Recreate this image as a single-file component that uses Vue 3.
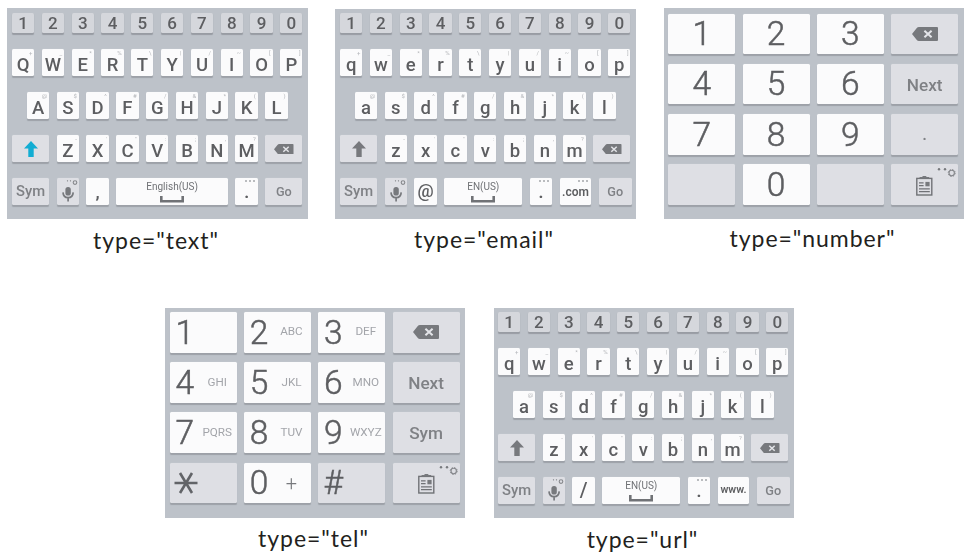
<script setup>
const digits = '1234567890'.split('').map((t) => ({ t, kind: 'digit' }))

const hints = {
  q: '+', w: '_', e: '*', r: '%', t: '\\', y: '|', u: '/', i: '~', o: '[', p: ']',
  a: '@', s: '$', d: '^', f: '#', g: '/', h: '&', j: '*', k: '(', l: ')',
  z: '-', x: "'", c: '"', v: ':', b: ';', n: ',', m: '?'
}

const letters = (text, upper) =>
  text.split('').map((c) => ({ t: upper ? c.toUpperCase() : c, hint: hints[c], kind: 'letter' }))

const qwerty = (upper, bottom) => [
  { cls: 'row-digits', keys: digits },
  { cls: 'row-top', keys: letters('qwertyuiop', upper) },
  { cls: 'row-home', keys: letters('asdfghjkl', upper) },
  {
    cls: 'row-low',
    keys: [
      { icon: 'shift', kind: upper ? 'func wide active' : 'func wide' },
      ...letters('zxcvbnm', upper),
      { icon: 'back', kind: 'func wide' }
    ]
  },
  {
    cls: 'row-bottom',
    keys: [{ t: 'Sym', kind: 'func wide sym' }, { icon: 'mic', kind: 'func unit' }, ...bottom]
  }
]

const netBottom = (first, last, lastKind) => [
  { t: first, kind: 'unit mark' },
  { t: 'EN(US)', kind: 'space', icon: 'space' },
  { t: '.', kind: 'unit dot', dots: true },
  { t: last, kind: 'domain ' + lastKind, dots: lastKind === 'com' },
  { t: 'Go', kind: 'func go narrow' }
]

const textBottom = [
  { t: ',', kind: 'unit comma' },
  { t: 'English(US)', kind: 'space', icon: 'space' },
  { t: '.', kind: 'unit dot', dots: true },
  { t: 'Go', kind: 'func go wide' }
]

const num = (t, sub) => ({ t, sub, kind: 'num' })

const numberPad = [
  num('1'), num('2'), num('3'), { icon: 'back', kind: 'func' },
  num('4'), num('5'), num('6'), { t: 'Next', kind: 'func word' },
  num('7'), num('8'), num('9'), { t: '.', kind: 'func point' },
  { kind: 'func' }, num('0'), { kind: 'func' }, { icon: 'clip', kind: 'func' }
]

const telPad = [
  num('1', ' '), num('2', 'ABC'), num('3', 'DEF'), { icon: 'back', kind: 'func' },
  num('4', 'GHI'), num('5', 'JKL'), num('6', 'MNO'), { t: 'Next', kind: 'func word' },
  num('7', 'PQRS'), num('8', 'TUV'), num('9', 'WXYZ'), { t: 'Sym', kind: 'func word' },
  { icon: 'star', kind: 'func star' }, { t: '0', sub: '+', kind: 'num plus' },
  { t: '#', sub: ' ', kind: 'func num' }, { icon: 'clip', kind: 'func' }
]

const lines = [
  [
    { type: 'text', rows: qwerty(true, textBottom) },
    { type: 'email', rows: qwerty(false, netBottom('@', '.com', 'com')) },
    { type: 'number', pad: numberPad }
  ],
  [
    { type: 'tel', pad: telPad },
    { type: 'url', rows: qwerty(false, netBottom('/', 'www.', 'www')) }
  ]
]
</script>

<template>
  <main class="page">
    <section v-for="(line, n) in lines" :key="n" class="line" :class="'line-' + n">
      <figure v-for="kb in line" :key="kb.type" :class="'fig-' + kb.type">
        <div class="board" :class="kb.pad ? 'pad' : 'qwerty'">
          <div
            v-for="(row, r) in kb.rows || [{ cls: 'cells', keys: kb.pad }]"
            :key="r"
            class="row"
            :class="row.cls"
          >
            <div v-for="(k, i) in row.keys" :key="i" class="key" :class="[k.kind, { tel: k.sub }]">
              <span v-if="k.t" class="label">{{ k.t }}</span>
              <span v-if="k.sub" class="sub">{{ k.sub }}</span>
              <span v-if="k.hint" class="hint">{{ k.hint }}</span>
              <span v-if="k.dots" class="more"><i></i><i></i><i></i></span>

              <svg v-if="k.icon === 'shift'" class="i-shift" viewBox="0 0 14 16">
                <path d="M7 0 14 7.6H9.7V16H4.3V7.6H0Z" />
              </svg>
              <svg v-if="k.icon === 'back'" class="i-back" viewBox="0 0 26 14">
                <path d="M7 0H25Q26 0 26 1V13Q26 14 25 14H7Q5.5 14 4.6 12.8L0 7 4.6 1.2Q5.5 0 7 0Z" />
                <path class="cross" d="M12.4 3.7 19.6 10.3M19.6 3.7 12.4 10.3" />
              </svg>
              <svg v-if="k.icon === 'mic'" class="i-mic" viewBox="0 0 22 26">
                <rect x="8.4" y="9" width="5.4" height="8.5" rx="2.6" />
                <path class="line" d="M6 14.4Q6.3 19.6 11.1 19.6T16.2 14.4M11.1 19.6V23.6" />
                <circle cx="10.5" cy="2.8" r=".65" /><circle cx="13.5" cy="2.8" r=".65" />
                <circle class="cog" cx="18" cy="4.6" r="1.8" />
              </svg>
              <svg v-if="k.icon === 'space'" class="i-space" viewBox="0 0 24 7">
                <path d="M1.3 0V5.3H22.7V0" />
              </svg>
              <svg v-if="k.icon === 'star'" class="i-star" viewBox="0 0 24 22">
                <path d="M.5 11H23.5M6 1 18 21M18 1 6 21" />
              </svg>
              <svg v-if="k.icon === 'clip'" class="i-clip" viewBox="0 0 67 41">
                <rect class="frame" x="25.8" y="14.4" width="15" height="16.6" />
                <path d="M28.6 14.4V13H31L32 12H34.8L35.8 13H38.2V14.4Z" />
                <path class="rule" d="M28 18.8H32.6M28 21.6H32.6M28 24.8H38.8M28 27.6H38.8" />
                <rect x="34.4" y="17.9" width="4.2" height="4.4" />
                <circle cx="48" cy="5.3" r="1.2" /><circle cx="54" cy="5.3" r="1.2" />
                <circle class="cog-dash" cx="60.7" cy="9" r="3.5" />
                <circle class="cog" cx="60.7" cy="9" r="2.7" />
              </svg>
            </div>
          </div>
        </div>
        <figcaption>type="{{ kb.type }}"</figcaption>
      </figure>
    </section>
  </main>
</template>

<style>
body { margin: 0; background: #fff; overflow: hidden; }
</style>

<style scoped>
.page { width: 966px; height: 558px; box-sizing: border-box; padding-top: 8px; background: #fff; }
.line { display: flex; align-items: flex-start; height: 300px; }
.line-0 { padding-left: 7px; }
.line-1 { padding-left: 165px; height: 250px; }
figure { margin: 0; width: 301px; }
.fig-email { margin: 1px 0 0 27px; }
.fig-number { margin-left: 28px; width: 300px; }
.fig-tel { width: 300px; }
.fig-url { width: 300px; margin-left: 29px; }

.board {
  box-sizing: border-box; height: 211px; background: #bdc2c9; overflow: hidden;
  font-family: Roboto, "Liberation Sans", sans-serif; color: #5d5e61;
}
.fig-email .board, .fig-tel .board, .fig-url .board { height: 210px; }
.qwerty { padding: 5px 0 0 5px; }
.fig-email .qwerty { padding-top: 4px; }
.fig-url .qwerty { padding: 4px 0 0 4px; }
.row { display: flex; gap: 7.5px; filter: blur(.45px); }
.row-digits { height: 20px; margin-bottom: 16px; }
.row-top { height: 27px; margin-bottom: 16px; }
.row-home { height: 27px; margin-bottom: 15.5px; padding-left: 14.9px; }
.row-low { height: 27px; margin-bottom: 16.5px; }
.row-bottom { height: 26.5px; }

.key {
  position: relative; box-sizing: border-box; display: flex; align-items: center;
  justify-content: center; flex: none; background: #fbfbfc; border-radius: 1.5px;
  box-shadow: 0 1.5px 1px #9da1a8, 0 0 1px #d5d8dc; line-height: 1;
}
.digit, .letter, .unit { width: 22.3px; }
.digit { background: #d5d7dc; font-size: 17px; font-weight: 500; box-shadow: 0 1.5px 1px #989ca3; }
.letter { padding-top: 5.5px; font-size: 18.5px; font-weight: 500; }
.func { background: #dedfe4; color: #7f8185; }
.wide { width: 37.2px; }
.narrow { width: 32.8px; }
.sym { font-size: 14.8px; font-weight: 500; padding-top: 1px; }
.go { font-size: 12.7px; font-weight: 500; padding-top: 2px; }
.mark { font-size: 18px; font-weight: 500; }
.fig-url .mark { font-size: 20px; }
.comma, .dot { font-size: 17px; font-weight: 700; padding-top: 2px; }
.domain { width: 31.7px; font-size: 12px; font-weight: 600; padding-top: 1px; }
.www { font-size: 10.7px; }
.space { flex-direction: column; width: 111.7px; font-size: 10px; font-weight: 400; color: #6f7175; justify-content: flex-start; padding-top: 4px; }
.fig-email .space, .fig-url .space { width: 78px; }
.hint { position: absolute; top: 1px; right: 2px; font-size: 6px; line-height: 5px; font-weight: 400; color: #b4b6ba; }
.letter .label { line-height: 14px; }
.more { position: absolute; top: 2px; right: 3px; display: flex; gap: 2px; }
.more i { width: 2px; height: 2px; background: #a5a7ab; border-radius: 1px; }

.pad { padding: 5.7px 0 0 4.3px; }
.fig-tel .pad { padding: 4px 0 0 4.7px; }
.cells { display: grid; grid-template-columns: repeat(4, 67px); grid-auto-rows: 40.5px; gap: 9.7px 7.3px; }
.num { font-size: 33.5px; font-weight: 300; -webkit-text-stroke: .5px #5d5e61; color: #5d5e61; }
.tel { justify-content: flex-start; }
.tel .label { width: 30px; text-align: center; }
.sub { width: 35px; text-align: center; font-size: 11.7px; font-weight: 400; color: #a3a5aa; -webkit-text-stroke: 0; }
.plus .sub { font-size: 20px; font-weight: 300; color: #77797d; }
.word { font-size: 17.2px; font-weight: 500; padding-top: 2px; }
.point { font-size: 17px; font-weight: 500; }
.star { justify-content: flex-start; padding-left: 4px; }

svg { display: block; fill: #77797d; }
.i-shift { width: 14px; height: 16px; margin-top: 1.5px; }
.active .i-shift { fill: #12add3; }
.i-back { width: 19.5px; height: 10.5px; margin-top: 1.5px; }
.pad .i-back { width: 26px; height: 14px; margin-top: 0; }
.cross { stroke: #e4e5e9; stroke-width: 2; }
.i-mic { width: 22px; height: 26px; }
.i-mic .line { fill: none; stroke: #77797d; stroke-width: 1.7; height: auto; }
.cog { fill: none; stroke: #85878b; stroke-width: 1.1; }
.cog-dash { fill: none; stroke: #85878b; stroke-width: 1; stroke-dasharray: 1.4 1.35; }
.i-space { width: 24px; height: 7px; margin-top: 3.5px; }
.i-space path { fill: none; stroke: #707276; stroke-width: 2.6; }
.i-star { width: 24px; height: 22px; }
.i-star path { stroke: #626468; stroke-width: 2.6; }
.i-clip { width: 67px; height: 41px; }
.frame { fill: none; stroke: #707276; stroke-width: 1.4; }
.rule { stroke: #707276; stroke-width: 1.2; }

figcaption {
  font-family: Lato, "Open Sans", sans-serif; font-size: 23px; line-height: 26px; color: #231f20;
  text-align: center; white-space: nowrap; letter-spacing: .95px; padding: 7px 3px 0 0;
}
.fig-text figcaption, .fig-url figcaption { padding-top: 8px; }
.fig-number figcaption { padding-top: 6px; }
</style>
